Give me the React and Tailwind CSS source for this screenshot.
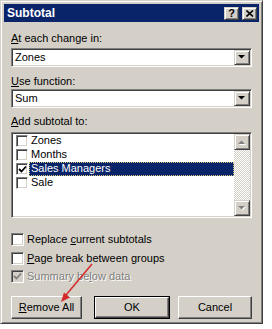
const raised =
  "bg-[#d4d0c8] border border-t-[#d4d0c8] border-l-[#d4d0c8] border-r-[#404040] border-b-[#404040] shadow-[inset_1px_1px_0_#fff,inset_-1px_-1px_0_#808080]";
const sunken =
  "border border-t-[#808080] border-l-[#808080] border-r-white border-b-white shadow-[inset_1px_1px_0_#404040,inset_-1px_-1px_0_#d4d0c8]";

function Triangle({ up, disabled }) {
  const pts = up ? "0,4 7,4 3.5,0.5" : "0,0 7,0 3.5,3.5";
  return (
    <svg width="8" height="5" viewBox="0 0 8 5" className="overflow-visible">
      {disabled && (
        <polygon points={pts} fill="#fff" transform="translate(1,1)" />
      )}
      <polygon points={pts} fill={disabled ? "#808080" : "#000"} />
    </svg>
  );
}

function Combo({ value }) {
  return (
    <div className={`h-[19px] flex bg-white p-[1px] ${sunken}`}>
      <div className="flex-1 pl-[2px] leading-[15px]">{value}</div>
      <div className={`w-[16px] flex items-center justify-center ${raised}`}>
        <Triangle />
      </div>
    </div>
  );
}

function Check({ color = "#000" }) {
  return (
    <svg width="9" height="9" viewBox="0 0 9 9">
      <polyline
        points="1,4 3.5,6.5 8,1.5"
        fill="none"
        stroke={color}
        strokeWidth="1.8"
      />
    </svg>
  );
}

function Box({ size = "w-[13px] h-[13px]", checked, disabled }) {
  return (
    <div
      className={`${size} shrink-0 flex items-center justify-center ${disabled ? "bg-[#d4d0c8]" : "bg-white"} ${sunken}`}
    >
      {checked && <Check color={disabled ? "#808080" : "#000"} />}
    </div>
  );
}

function ListRow({ label, checked, selected }) {
  return (
    <div className="h-[14px] flex items-center pl-[3px]">
      <Box size="w-[12px] h-[12px]" checked={checked} />
      <div
        className={`flex-1 h-[14px] ml-[1px] pl-[2px] leading-[13px] ${selected ? "bg-[#0a246a] text-white outline outline-1 outline-dotted outline-[#d8c880] -outline-offset-1" : ""}`}
      >
        {label}
      </div>
    </div>
  );
}

function Option({ children, checked, disabled }) {
  return (
    <div className="h-[14px] flex items-center">
      <Box checked={checked} disabled={disabled} />
      <span
        className={`ml-[3px] leading-[14px] ${disabled ? "text-[#808080] [text-shadow:1px_1px_0_#fff]" : ""}`}
      >
        {children}
      </span>
    </div>
  );
}

function Button({ children, width, isDefault }) {
  const face = (
    <div
      className={`h-full flex items-center justify-center bg-[#d4d0c8] border border-t-white border-l-white border-r-[#404040] border-b-[#404040] shadow-[inset_-1px_-1px_0_#808080]`}
    >
      {children}
    </div>
  );
  return (
    <div className={`${width} h-[23px]`}>
      {isDefault ? (
        <div className="h-full border border-black">{face}</div>
      ) : (
        face
      )}
    </div>
  );
}

export default function App() {
  return (
    <div className="relative w-[272px] h-[329px] bg-white overflow-hidden font-['Liberation_Sans',Arial,sans-serif] text-[11px] text-black">
      <div className="w-[263px] h-[324px] bg-[#d4d0c8] border border-t-[#d4d0c8] border-l-[#d4d0c8] border-r-[#404040] border-b-[#404040] shadow-[inset_1px_1px_0_#fff,inset_-1px_-1px_0_#808080] p-[3px] flex flex-col">
        {/* title bar */}
        <div className="h-[18px] bg-[#0a246a] flex items-center pl-[3px] pr-[2px]">
          <span className="flex-1 text-white font-bold text-[12px] leading-none">
            Subtotal
          </span>
          <div className={`w-[15px] h-[13px] flex items-center justify-center font-bold text-[11px] leading-none ${raised}`}>
            ?
          </div>
          <div className={`w-[15px] h-[13px] ml-[3px] flex items-center justify-center ${raised}`}>
            <svg width="8" height="7" viewBox="0 0 8 7">
              <path d="M0.5 0.5 L7 6.5 M7 0.5 L0.5 6.5" stroke="#000" strokeWidth="1.6" />
            </svg>
          </div>
        </div>

        <div className="flex flex-col px-[7px]">
          <div className="mt-[9px] h-[14px] leading-[14px]">
            <span className="underline">A</span>t each change in:
          </div>
          <div className="mt-[3px]">
            <Combo value="Zones" />
          </div>

          <div className="mt-[7px] h-[14px] leading-[14px]">
            <span className="underline">U</span>se function:
          </div>
          <div className="mt-[1px]">
            <Combo value="Sum" />
          </div>

          <div className="mt-[6px] h-[14px] leading-[14px]">
            <span className="underline">A</span>dd subtotal to:
          </div>
          <div className={`mt-[4px] h-[86px] bg-white p-[1px] flex ${sunken}`}>
            <div className="flex-1 flex flex-col">
              <ListRow label="Zones" />
              <ListRow label="Months" />
              <ListRow label="Sales Managers" checked selected />
              <ListRow label="Sale" />
            </div>
            <div className="w-[16px] flex flex-col">
              <div className={`h-[16px] flex items-center justify-center ${raised}`}>
                <Triangle up disabled />
              </div>
              <div className="flex-1 bg-[repeating-conic-gradient(#d4d0c8_0_25%,#fff_0_50%)] bg-[length:2px_2px]" />
              <div className={`h-[16px] flex items-center justify-center ${raised}`}>
                <Triangle disabled />
              </div>
            </div>
          </div>

          <div className="mt-[14px]">
            <Option>
              Replace <span className="underline">c</span>urrent subtotals
            </Option>
          </div>
          <div className="mt-[5px]">
            <Option>
              <span className="underline">P</span>age break between groups
            </Option>
          </div>
          <div className="mt-[4px]">
            <Option checked disabled>
              Summary be<span className="underline">l</span>ow data
            </Option>
          </div>

          <div className="mt-[13px] flex">
            <Button width="w-[72px]">
              <span>
                <span className="underline">R</span>emove All
              </span>
            </Button>
            <div className="ml-[12px]">
              <Button width="w-[76px]" isDefault>
                OK
              </Button>
            </div>
            <div className="ml-[8px]">
              <Button width="w-[74px]">Cancel</Button>
            </div>
          </div>
        </div>
      </div>

      {/* red annotation arrow */}
      <svg
        className="absolute left-0 top-0 pointer-events-none"
        width="272"
        height="329"
        viewBox="0 0 272 329"
      >
        <line x1="92" y1="264" x2="66" y2="295" stroke="#d42a2a" strokeWidth="1.5" />
        <polygon points="61,302 70,297.5 64,292.5" fill="#d42a2a" />
      </svg>
    </div>
  );
}
